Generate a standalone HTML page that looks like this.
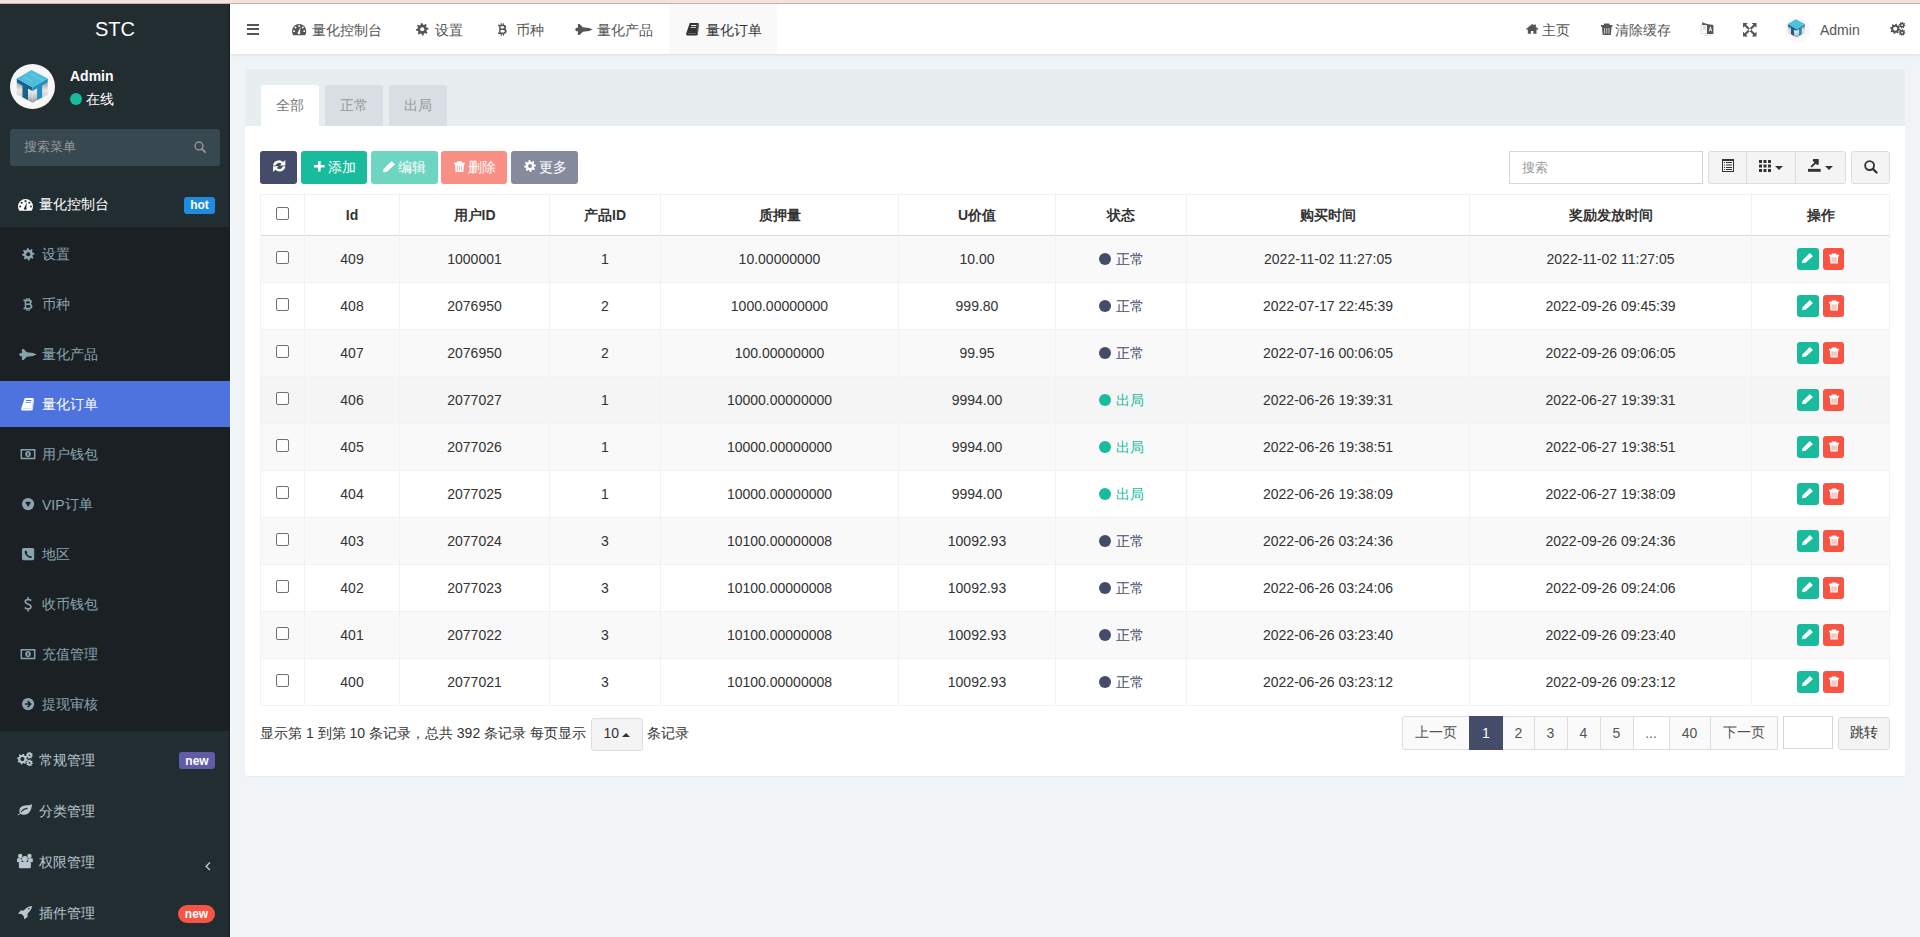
<!DOCTYPE html><html><head><meta charset="utf-8"><title>STC</title><style>
*{box-sizing:border-box;margin:0;padding:0}
html,body{width:1920px;height:937px;overflow:hidden}
body{font-family:"Liberation Sans",sans-serif;background:#f1f4f6;position:relative;color:#333;font-size:14px}
.a{position:absolute}
.t{position:absolute;white-space:nowrap;line-height:1}
svg.a{display:block;overflow:visible}
i.c{font-style:normal;display:inline-block;width:1em;text-align:center;position:relative;top:-0.5px}
</style></head><body>
<div class="a" style="left:0px;top:0px;width:1920px;height:3px;background:#f5e2db"></div>
<div class="a" style="left:0px;top:3px;width:1920px;height:1px;background:#c9b6b1"></div>
<div class="a" style="left:0px;top:4px;width:230px;height:933px;background:#222d32"></div>
<div class="t" style="left:-185px;width:600px;text-align:center;top:19.07px;font-size:20px;color:#fff;font-weight:normal;">STC</div>
<div class="a" style="left:10px;top:64px;width:45px;height:45px;border-radius:50%;background:#f6f6f6"></div>
<svg class="a" style="left:8px;top:62px" width="50" height="50" viewBox="0 0 937 937"><defs><linearGradient id="gL" x1="0" y1="0" x2="0" y2="1"><stop offset="0" stop-color="#9a9a9a"/><stop offset=".5" stop-color="#e8e8e8"/><stop offset="1" stop-color="#cfcfcf"/></linearGradient><linearGradient id="gR" x1="0" y1="0" x2="0" y2="1"><stop offset="0" stop-color="#f4f4f4"/><stop offset=".6" stop-color="#c8c8c8"/><stop offset="1" stop-color="#8a8a8a"/></linearGradient></defs><path d="M165 385L270 445V660L165 605Z" fill="url(#gL)"/><path d="M375 505L460 545V765L375 715Z" fill="url(#gR)"/><path d="M460 545L545 495V715L460 765Z" fill="url(#gR)"/><path d="M640 440L745 385V610L640 665Z" fill="url(#gL)"/><path d="M165 310L460 475V545L375 500V715L270 660V445L165 385Z" fill="#17648a"/><path d="M460 475L745 310V385L640 440V665L545 715V495L460 545Z" fill="#238ec0"/><path d="M165 310L440 148L745 310L460 475Z" fill="#4dbfdc"/><path d="M300 280L455 365M440 235L650 345" stroke="#b9e6c8" stroke-width="10" opacity=".7"/></svg>
<div class="t" style="left:70px;top:69.15px;font-size:14px;color:#fff;font-weight:bold;">Admin</div>
<div class="a" style="left:70px;top:93px;width:12px;height:12px;border-radius:50%;background:#18bc9c"></div>
<div class="t" style="left:86px;top:92.15px;font-size:14px;color:#fff;font-weight:normal;"><i class="c">在</i><i class="c">线</i></div>
<div class="a" style="left:10px;top:129px;width:210px;height:37px;background:#374850;border-radius:3px"></div>
<div class="t" style="left:24px;top:140.50px;font-size:13px;color:#999;font-weight:normal;"><i class="c">搜</i><i class="c">索</i><i class="c">菜</i><i class="c">单</i></div>
<svg class="a" style="left:194px;top:141px" width="12" height="12" viewBox="0 0 14 14"><circle cx="5.8" cy="5.8" r="4.6" fill="none" stroke="#999" stroke-width="1.6"/><path d="M9.2 9.2L13 13" stroke="#999" stroke-width="2.1" stroke-linecap="round"/></svg>
<svg class="a" style="left:17.5px;top:199px" width="15" height="11.700000000000001" viewBox="0 0 16 12.5"><path d="M8 0A8 8 0 0 0 0 8c0 1.7.5 3.2 1.4 4.5h13.2C15.5 11.2 16 9.7 16 8A8 8 0 0 0 8 0z" fill="#fff"/><circle cx="8" cy="2.3" r="1.1" fill="#222d32"/><circle cx="3.9" cy="4" r="1.1" fill="#222d32"/><circle cx="12.1" cy="4" r="1.1" fill="#222d32"/><circle cx="2.3" cy="8" r="1.1" fill="#222d32"/><circle cx="13.7" cy="8" r="1.1" fill="#222d32"/><path d="M9.6 3.2L8.9 9a1.5 1.5 0 1 1-1.9-.3z" fill="#222d32"/></svg>
<div class="t" style="left:39px;top:197.15px;font-size:14px;color:#fff;font-weight:normal;"><i class="c">量</i><i class="c">化</i><i class="c">控</i><i class="c">制</i><i class="c">台</i></div>
<div class="a" style="left:184px;top:197px;width:31px;height:17px;background:#1d8ce0;border-radius:3px"></div>
<div class="t" style="left:-100.5px;width:600px;text-align:center;top:198.84px;font-size:12px;color:#fff;font-weight:bold;">hot</div>
<div class="a" style="left:0px;top:227px;width:230px;height:504px;background:#1a2023"></div>
<div class="a" style="left:229px;top:4px;width:1px;height:933px;background:#161c1f"></div>
<div class="a" style="left:230px;top:54px;width:1px;height:883px;background:#fafbfc"></div>
<div class="t" style="left:42px;top:247.65px;font-size:14px;color:#8aa4af;font-weight:normal;"><i class="c">设</i><i class="c">置</i></div>
<svg class="a" style="left:21.7px;top:247.8px" width="12.5" height="12.5" viewBox="0 0 16 16"><polygon points="15.84,6.41 16.00,7.97 13.69,9.11 13.37,10.20 14.67,12.42 13.68,13.64 11.24,12.81 10.24,13.35 9.59,15.84 8.03,16.00 6.89,13.69 5.80,13.37 3.58,14.67 2.36,13.68 3.19,11.24 2.65,10.24 0.16,9.59 0.00,8.03 2.31,6.89 2.63,5.80 1.33,3.58 2.32,2.36 4.76,3.19 5.76,2.65 6.41,0.16 7.97,0.00 9.11,2.31 10.20,2.63 12.42,1.33 13.64,2.32 12.81,4.76 13.35,5.76" fill="#8aa4af"/><circle cx="8" cy="8" r="2.6" fill="#1a2023"/></svg>
<div class="t" style="left:42px;top:297.65px;font-size:14px;color:#8aa4af;font-weight:normal;"><i class="c">币</i><i class="c">种</i></div>
<svg class="a" style="left:22.9px;top:298px" width="10.3" height="13.1" viewBox="0 0 10 14"><path d="M3 0h1.3v1.6h1V0h1.3v1.7C8.3 2 9 3 9 4.1c0 1-.5 1.8-1.4 2.2C8.9 6.7 9.6 7.6 9.6 8.9c0 1.8-1.3 2.9-3 3.1V14H5.3v-1.9h-1V14H3v-1.9H0v-1.7h1.3V3.5H0V1.7h3zm-.1 3.4v2.4h2.6c.8 0 1.4-.5 1.4-1.2s-.6-1.2-1.4-1.2zm0 4.2v2.8h3c.9 0 1.6-.6 1.6-1.4s-.7-1.4-1.6-1.4z" fill="#8aa4af"/></svg>
<div class="t" style="left:42px;top:347.65px;font-size:14px;color:#8aa4af;font-weight:normal;"><i class="c">量</i><i class="c">化</i><i class="c">产</i><i class="c">品</i></div>
<svg class="a" style="left:19.3px;top:349px" width="17.7" height="11" viewBox="0 0 750 465"><path d="M0 235L55 165H125V0H195L335 135L600 170L750 235L600 300L335 330L195 465H125V305H55Z" fill="#8aa4af"/></svg>
<div class="a" style="left:0px;top:381px;width:230px;height:46px;background:#4e73df"></div>
<div class="t" style="left:42px;top:397.65px;font-size:14px;color:#fff;font-weight:normal;"><i class="c">量</i><i class="c">化</i><i class="c">订</i><i class="c">单</i></div>
<svg class="a" style="left:21.1px;top:397.8px" width="13.7" height="12.4" viewBox="0 0 13.7 12.4"><path d="M3.8 0H12.4L13.1 2L11.8 11.8L10.6 12.4H.9L0 11.2L.2 10.4ZM5.1 2H10.5L10.3 2.9H4.9ZM4.7 3.9H10.1L9.9 4.8H4.5ZM1.8 10.4L1.6 10.8H9.9L10.1 10.4Z" fill="#fff" fill-rule="evenodd"/><path d="M12.4 .8L11.3 11.2" stroke="#4e73df" stroke-width=".5" opacity=".6"/></svg>
<div class="t" style="left:42px;top:447.65px;font-size:14px;color:#8aa4af;font-weight:normal;"><i class="c">用</i><i class="c">户</i><i class="c">钱</i><i class="c">包</i></div>
<svg class="a" style="left:20px;top:448.8px" width="16" height="10.2" viewBox="0 0 16 11"><rect x="0" y="0" width="16" height="11" rx=".5" fill="#8aa4af"/><rect x="1.6" y="1.6" width="12.8" height="7.8" fill="#1a2023"/><ellipse cx="8" cy="5.5" rx="3" ry="3.3" fill="#8aa4af"/><rect x="7.4" y="3.6" width="1.2" height="3.8" fill="#1a2023"/></svg>
<div class="t" style="left:42px;top:497.65px;font-size:14px;color:#8aa4af;font-weight:normal;">VIP<i class="c">订</i><i class="c">单</i></div>
<svg class="a" style="left:21.8px;top:497.8px" width="12.2" height="12.2" viewBox="0 0 12.2 12.2"><circle cx="6.1" cy="6.1" r="6.1" fill="#8aa4af"/><path d="M3.2 4.1Q6.1 3.2 9 4.1L6.1 9Z" fill="#1a2023"/></svg>
<div class="t" style="left:42px;top:547.65px;font-size:14px;color:#8aa4af;font-weight:normal;"><i class="c">地</i><i class="c">区</i></div>
<svg class="a" style="left:21.8px;top:547.8px" width="12.2" height="12.2" viewBox="0 0 12.2 12.2"><rect width="12.2" height="12.2" rx="1.6" fill="#8aa4af"/><path d="M3.2 2.6C2.4 3.2 2.5 4.8 3.6 6.6S6.6 9.7 8.2 10C9 10.1 9.7 9.6 10.1 9.1L8.6 7.8L7.6 8.3C6.6 7.8 5.3 6.5 4.8 5.5L5.4 4.5L4.2 2.8Z" fill="#1a2023"/></svg>
<div class="t" style="left:42px;top:597.65px;font-size:14px;color:#8aa4af;font-weight:normal;"><i class="c">收</i><i class="c">币</i><i class="c">钱</i><i class="c">包</i></div>
<svg class="a" style="left:23.9px;top:596.7px" width="8.1" height="14.4" viewBox="0 0 8.1 14.4"><path d="M7.2 3.6Q6.2 2.5 4.2 2.5Q1.2 2.6 1.2 4.7C1.2 7.4 7 6.4 7 9.8Q7 12 4 12Q1.8 12 .7 10.6M4.1 0V2.5M4.1 12V14.4" fill="none" stroke="#8aa4af" stroke-width="1.6"/></svg>
<div class="t" style="left:42px;top:647.65px;font-size:14px;color:#8aa4af;font-weight:normal;"><i class="c">充</i><i class="c">值</i><i class="c">管</i><i class="c">理</i></div>
<svg class="a" style="left:20px;top:648.8px" width="16" height="10.2" viewBox="0 0 16 11"><rect x="0" y="0" width="16" height="11" rx=".5" fill="#8aa4af"/><rect x="1.6" y="1.6" width="12.8" height="7.8" fill="#1a2023"/><ellipse cx="8" cy="5.5" rx="3" ry="3.3" fill="#8aa4af"/><rect x="7.4" y="3.6" width="1.2" height="3.8" fill="#1a2023"/></svg>
<div class="t" style="left:42px;top:697.65px;font-size:14px;color:#8aa4af;font-weight:normal;"><i class="c">提</i><i class="c">现</i><i class="c">审</i><i class="c">核</i></div>
<svg class="a" style="left:21.8px;top:697.8px" width="12.2" height="12.2" viewBox="0 0 12.2 12.2"><circle cx="6.1" cy="6.1" r="6.1" fill="#8aa4af"/><path d="M2.9 6.1H8.9M5.6 3.1L8.7 6.1L5.6 9.1" fill="none" stroke="#1a2023" stroke-width="1.5"/></svg>
<div class="t" style="left:39px;top:753.15px;font-size:14px;color:#b8c7ce;font-weight:normal;"><i class="c">常</i><i class="c">规</i><i class="c">管</i><i class="c">理</i></div>
<div class="t" style="left:39px;top:804.15px;font-size:14px;color:#b8c7ce;font-weight:normal;"><i class="c">分</i><i class="c">类</i><i class="c">管</i><i class="c">理</i></div>
<div class="t" style="left:39px;top:855.15px;font-size:14px;color:#b8c7ce;font-weight:normal;"><i class="c">权</i><i class="c">限</i><i class="c">管</i><i class="c">理</i></div>
<div class="t" style="left:39px;top:906.15px;font-size:14px;color:#b8c7ce;font-weight:normal;"><i class="c">插</i><i class="c">件</i><i class="c">管</i><i class="c">理</i></div>
<svg class="a" style="left:17px;top:751.8px" width="16.1" height="14.2" viewBox="0 0 16.1 14.2"><polygon points="10.77,7.63 10.57,8.67 9.02,9.03 8.57,9.70 8.83,11.27 7.95,11.86 6.59,11.02 5.80,11.18 4.87,12.47 3.83,12.27 3.47,10.72 2.80,10.27 1.23,10.53 0.64,9.65 1.48,8.29 1.32,7.50 0.03,6.57 0.23,5.53 1.78,5.17 2.23,4.50 1.97,2.93 2.85,2.34 4.21,3.18 5.00,3.02 5.93,1.73 6.97,1.93 7.33,3.48 8.00,3.93 9.57,3.67 10.16,4.55 9.32,5.91 9.48,6.70" fill="#b8c7ce"/><circle cx="5.4" cy="7.1" r="2.1" fill="#222d32"/><polygon points="15.98,3.64 15.85,4.32 14.79,4.53 14.51,4.95 14.72,6.01 14.15,6.39 13.25,5.79 12.75,5.89 12.16,6.78 11.48,6.65 11.27,5.59 10.85,5.31 9.79,5.52 9.41,4.95 10.01,4.05 9.91,3.55 9.02,2.96 9.15,2.28 10.21,2.07 10.49,1.65 10.28,0.59 10.85,0.21 11.75,0.81 12.25,0.71 12.84,-0.18 13.52,-0.05 13.73,1.01 14.15,1.29 15.21,1.08 15.59,1.65 14.99,2.55 15.09,3.05" fill="#b8c7ce"/><circle cx="12.5" cy="3.3" r="0.9" fill="#222d32"/><polygon points="15.98,11.24 15.85,11.92 14.79,12.13 14.51,12.55 14.72,13.61 14.15,13.99 13.25,13.39 12.75,13.49 12.16,14.38 11.48,14.25 11.27,13.19 10.85,12.91 9.79,13.12 9.41,12.55 10.01,11.65 9.91,11.15 9.02,10.56 9.15,9.88 10.21,9.67 10.49,9.25 10.28,8.19 10.85,7.81 11.75,8.41 12.25,8.31 12.84,7.42 13.52,7.55 13.73,8.61 14.15,8.89 15.21,8.68 15.59,9.25 14.99,10.15 15.09,10.65" fill="#b8c7ce"/><circle cx="12.5" cy="10.9" r="0.9" fill="#222d32"/></svg>
<svg class="a" style="left:17.3px;top:803.7px" width="15.1" height="11.3" viewBox="0 0 15.1 11.3"><path d="M15 0C13.5 1.3 11 1.3 8 1.5C4.5 1.8 2.6 3.6 2.4 6.5C2.3 7.8 2.6 8.7 3 9.2L0.3 11L1.2 11.3L3.6 9.8C4.5 10.6 6 11 7.6 10.8C11.5 10.4 13.5 7.5 14.4 4C14.7 2.5 14.9 1.2 15 0Z" fill="#b8c7ce"/><path d="M4.2 7.8Q6.4 4.8 10.2 4.4" fill="none" stroke="#222d32" stroke-width="1.1" stroke-linecap="round"/></svg>
<svg class="a" style="left:17px;top:853.8px" width="15.8" height="14.2" viewBox="0 0 15.8 14.2"><circle cx="3.2" cy="2" r="2.2" fill="#b8c7ce"/><circle cx="12.5" cy="2" r="2.2" fill="#b8c7ce"/><rect x="0" y="4.3" width="4.7" height="3.9" rx=".8" fill="#b8c7ce"/><rect x="11.1" y="4.3" width="4.7" height="3.9" rx=".8" fill="#b8c7ce"/><circle cx="7.9" cy="5" r="2.9" fill="#b8c7ce"/><rect x="1.9" y="8.1" width="12" height="6.1" rx="1.2" fill="#b8c7ce"/></svg>
<svg class="a" style="left:18px;top:905.7px" width="14" height="13.3" viewBox="0 0 14 13.3"><path d="M14 0C10.5 .2 8 1.8 5.8 4.4L2.6 4.4L0 7.8L3.4 8.1L5.8 10.3L6.2 13.3L9.6 10.9L9.6 7.5C12.2 5.3 13.8 3 14 0Z" fill="#b8c7ce"/><circle cx="10.9" cy="2.8" r=".8" fill="#222d32"/></svg>
<div class="a" style="left:179px;top:752px;width:36px;height:17px;background:#605ca8;border-radius:3px"></div>
<div class="t" style="left:-103px;width:600px;text-align:center;top:754.84px;font-size:12px;color:#fff;font-weight:bold;">new</div>
<div class="a" style="left:178px;top:905px;width:37px;height:18px;background:#f75444;border-radius:9px"></div>
<div class="t" style="left:-103.5px;width:600px;text-align:center;top:907.84px;font-size:12px;color:#fff;font-weight:bold;">new</div>
<svg class="a" style="left:204.5px;top:862px" width="6" height="8.5" viewBox="0 0 6 9"><path d="M5 .5L1 4.5 5 8.5" fill="none" stroke="#b8c7ce" stroke-width="1.5"/></svg>
<div class="a" style="left:230px;top:4px;width:1690px;height:50px;background:#fff;box-shadow:0 1px 3px rgba(0,0,0,.09)"></div>
<div class="a" style="left:246.5px;top:23.5px;width:12.5px;height:2px;background:#555"></div>
<div class="a" style="left:246.5px;top:28px;width:12.5px;height:2px;background:#555"></div>
<div class="a" style="left:246.5px;top:32.5px;width:12.5px;height:2px;background:#555"></div>
<div class="a" style="left:669px;top:4px;width:108px;height:50px;background:#f9f9f9"></div>
<div class="t" style="left:312px;top:23.15px;font-size:14px;color:#555;font-weight:normal;"><i class="c">量</i><i class="c">化</i><i class="c">控</i><i class="c">制</i><i class="c">台</i></div>
<div class="t" style="left:435px;top:23.15px;font-size:14px;color:#555;font-weight:normal;"><i class="c">设</i><i class="c">置</i></div>
<div class="t" style="left:515.8px;top:23.15px;font-size:14px;color:#555;font-weight:normal;"><i class="c">币</i><i class="c">种</i></div>
<div class="t" style="left:597px;top:23.15px;font-size:14px;color:#555;font-weight:normal;"><i class="c">量</i><i class="c">化</i><i class="c">产</i><i class="c">品</i></div>
<div class="t" style="left:706px;top:23.15px;font-size:14px;color:#333;font-weight:normal;"><i class="c">量</i><i class="c">化</i><i class="c">订</i><i class="c">单</i></div>
<svg class="a" style="left:291.8px;top:24px" width="14.3" height="11.154000000000002" viewBox="0 0 16 12.5"><path d="M8 0A8 8 0 0 0 0 8c0 1.7.5 3.2 1.4 4.5h13.2C15.5 11.2 16 9.7 16 8A8 8 0 0 0 8 0z" fill="#555"/><circle cx="8" cy="2.3" r="1.1" fill="#fff"/><circle cx="3.9" cy="4" r="1.1" fill="#fff"/><circle cx="12.1" cy="4" r="1.1" fill="#fff"/><circle cx="2.3" cy="8" r="1.1" fill="#fff"/><circle cx="13.7" cy="8" r="1.1" fill="#fff"/><path d="M9.6 3.2L8.9 9a1.5 1.5 0 1 1-1.9-.3z" fill="#fff"/></svg>
<svg class="a" style="left:415.8px;top:23px" width="12.5" height="12.5" viewBox="0 0 16 16"><polygon points="15.84,6.41 16.00,7.97 13.69,9.11 13.37,10.20 14.67,12.42 13.68,13.64 11.24,12.81 10.24,13.35 9.59,15.84 8.03,16.00 6.89,13.69 5.80,13.37 3.58,14.67 2.36,13.68 3.19,11.24 2.65,10.24 0.16,9.59 0.00,8.03 2.31,6.89 2.63,5.80 1.33,3.58 2.32,2.36 4.76,3.19 5.76,2.65 6.41,0.16 7.97,0.00 9.11,2.31 10.20,2.63 12.42,1.33 13.64,2.32 12.81,4.76 13.35,5.76" fill="#555"/><circle cx="8" cy="8" r="2.6" fill="#fff"/></svg>
<svg class="a" style="left:498px;top:22.5px" width="9" height="13" viewBox="0 0 10 14"><path d="M3 0h1.3v1.6h1V0h1.3v1.7C8.3 2 9 3 9 4.1c0 1-.5 1.8-1.4 2.2C8.9 6.7 9.6 7.6 9.6 8.9c0 1.8-1.3 2.9-3 3.1V14H5.3v-1.9h-1V14H3v-1.9H0v-1.7h1.3V3.5H0V1.7h3zm-.1 3.4v2.4h2.6c.8 0 1.4-.5 1.4-1.2s-.6-1.2-1.4-1.2zm0 4.2v2.8h3c.9 0 1.6-.6 1.6-1.4s-.7-1.4-1.6-1.4z" fill="#555"/></svg>
<svg class="a" style="left:575.3px;top:24px" width="17.6" height="10.9" viewBox="0 0 750 465"><path d="M0 235L55 165H125V0H195L335 135L600 170L750 235L600 300L335 330L195 465H125V305H55Z" fill="#555"/></svg>
<svg class="a" style="left:685.6px;top:23px" width="13.7" height="12.4" viewBox="0 0 13.7 12.4"><path d="M3.8 0H12.4L13.1 2L11.8 11.8L10.6 12.4H.9L0 11.2L.2 10.4ZM5.1 2H10.5L10.3 2.9H4.9ZM4.7 3.9H10.1L9.9 4.8H4.5ZM1.8 10.4L1.6 10.8H9.9L10.1 10.4Z" fill="#333" fill-rule="evenodd"/><path d="M12.4 .8L11.3 11.2" stroke="#f9f9f9" stroke-width=".5" opacity=".6"/></svg>
<div class="t" style="left:1542px;top:23.15px;font-size:14px;color:#555;font-weight:normal;"><i class="c">主</i><i class="c">页</i></div>
<svg class="a" style="left:1525.7px;top:23.9px" width="12.3" height="9.9" viewBox="0 0 15 12"><path d="M7.5 0L0 6.2l1 1 1.2-1V12h3.8V8.5h3V12h3.8V6.2l1.2 1 1-1L12 3.3V.6h-2v1L7.5 0z" fill="#555"/></svg>
<div class="t" style="left:1615px;top:23.15px;font-size:14px;color:#555;font-weight:normal;"><i class="c">清</i><i class="c">除</i><i class="c">缓</i><i class="c">存</i></div>
<svg class="a" style="left:1600.5px;top:22.5px" width="11.5" height="12.5" viewBox="0 0 11 11"><path d="M3.2 0h4.6l.7 1.5H11v1.6H0V1.5h2.5zM.9 3.1h9.2l-.7 7.9H1.6z" fill="#555"/><path d="M3.4 4.4v5.4M5.5 4.4v5.4M7.6 4.4v5.4" stroke="#fff" stroke-width=".8" opacity=".85"/></svg>
<svg class="a" style="left:1701px;top:21.9px" width="12.7" height="13.8" viewBox="225 185 475 515"><path d="M235 300H450V615H235Z" fill="#fff" stroke="#c8c8c8" stroke-width="22"/><path d="M450 255L690 300V630H450Z" fill="#555"/><path d="M270 190L450 255V300H270Z" fill="#555"/><path d="M520 530L565 360H595L640 530H610L600 490H560L550 530ZM567 460H593L580 405Z" fill="#fff"/><path d="M300 370L400 370M350 340V380M310 470L390 410M320 410L400 480" stroke="#999" stroke-width="18"/><path d="M340 680H570L590 650" fill="none" stroke="#bbb" stroke-width="18"/></svg>
<svg class="a" style="left:1742.5px;top:22.5px" width="13.5" height="13.5" viewBox="0 0 14 14"><path d="M0 0h5L3.3 1.7 7 5.4 5.4 7 1.7 3.3 0 5zM14 0v5l-1.7-1.7L8.6 7 7 5.4l3.7-3.7L9 0zM14 14H9l1.7-1.7L7 8.6 8.6 7l3.7 3.7L14 9zM0 14V9l1.7 1.7L5.4 7 7 8.6l-3.7 3.7L5 14z" fill="#555"/></svg>
<div class="a" style="left:1785px;top:17.5px;width:25px;height:25px;border-radius:50%;background:#f8f8f8"></div>
<svg class="a" style="left:1782.5px;top:15.2px" width="27.5" height="27.5" viewBox="0 0 937 937"><defs><linearGradient id="gL" x1="0" y1="0" x2="0" y2="1"><stop offset="0" stop-color="#9a9a9a"/><stop offset=".5" stop-color="#e8e8e8"/><stop offset="1" stop-color="#cfcfcf"/></linearGradient><linearGradient id="gR" x1="0" y1="0" x2="0" y2="1"><stop offset="0" stop-color="#f4f4f4"/><stop offset=".6" stop-color="#c8c8c8"/><stop offset="1" stop-color="#8a8a8a"/></linearGradient></defs><path d="M165 385L270 445V660L165 605Z" fill="url(#gL)"/><path d="M375 505L460 545V765L375 715Z" fill="url(#gR)"/><path d="M460 545L545 495V715L460 765Z" fill="url(#gR)"/><path d="M640 440L745 385V610L640 665Z" fill="url(#gL)"/><path d="M165 310L460 475V545L375 500V715L270 660V445L165 385Z" fill="#17648a"/><path d="M460 475L745 310V385L640 440V665L545 715V495L460 545Z" fill="#238ec0"/><path d="M165 310L440 148L745 310L460 475Z" fill="#4dbfdc"/><path d="M300 280L455 365M440 235L650 345" stroke="#b9e6c8" stroke-width="10" opacity=".7"/></svg>
<div class="t" style="left:1820px;top:22.65px;font-size:14px;color:#555;font-weight:normal;">Admin</div>
<svg class="a" style="left:1890px;top:22px" width="15.5" height="13.7" viewBox="0 0 16.1 14.2"><polygon points="10.77,7.63 10.57,8.67 9.02,9.03 8.57,9.70 8.83,11.27 7.95,11.86 6.59,11.02 5.80,11.18 4.87,12.47 3.83,12.27 3.47,10.72 2.80,10.27 1.23,10.53 0.64,9.65 1.48,8.29 1.32,7.50 0.03,6.57 0.23,5.53 1.78,5.17 2.23,4.50 1.97,2.93 2.85,2.34 4.21,3.18 5.00,3.02 5.93,1.73 6.97,1.93 7.33,3.48 8.00,3.93 9.57,3.67 10.16,4.55 9.32,5.91 9.48,6.70" fill="#555"/><circle cx="5.4" cy="7.1" r="2.1" fill="#fff"/><polygon points="15.98,3.64 15.85,4.32 14.79,4.53 14.51,4.95 14.72,6.01 14.15,6.39 13.25,5.79 12.75,5.89 12.16,6.78 11.48,6.65 11.27,5.59 10.85,5.31 9.79,5.52 9.41,4.95 10.01,4.05 9.91,3.55 9.02,2.96 9.15,2.28 10.21,2.07 10.49,1.65 10.28,0.59 10.85,0.21 11.75,0.81 12.25,0.71 12.84,-0.18 13.52,-0.05 13.73,1.01 14.15,1.29 15.21,1.08 15.59,1.65 14.99,2.55 15.09,3.05" fill="#555"/><circle cx="12.5" cy="3.3" r="0.9" fill="#fff"/><polygon points="15.98,11.24 15.85,11.92 14.79,12.13 14.51,12.55 14.72,13.61 14.15,13.99 13.25,13.39 12.75,13.49 12.16,14.38 11.48,14.25 11.27,13.19 10.85,12.91 9.79,13.12 9.41,12.55 10.01,11.65 9.91,11.15 9.02,10.56 9.15,9.88 10.21,9.67 10.49,9.25 10.28,8.19 10.85,7.81 11.75,8.41 12.25,8.31 12.84,7.42 13.52,7.55 13.73,8.61 14.15,8.89 15.21,8.68 15.59,9.25 14.99,10.15 15.09,10.65" fill="#555"/><circle cx="12.5" cy="10.9" r="0.9" fill="#fff"/></svg>
<div class="a" style="left:245px;top:69px;width:1660px;height:707px;background:#fff;border-radius:3px;box-shadow:0 1px 1px rgba(0,0,0,.03)"></div>
<div class="a" style="left:245px;top:69px;width:1660px;height:57px;background:#e8edf0;border-radius:3px 3px 0 0"></div>
<div class="a" style="left:261px;top:85px;width:58px;height:41px;background:#fff;border-radius:3px 3px 0 0"></div>
<div class="a" style="left:325px;top:85px;width:58px;height:41px;background:#d8dee3;border-radius:3px 3px 0 0"></div>
<div class="a" style="left:389px;top:85px;width:58px;height:41px;background:#d8dee3;border-radius:3px 3px 0 0"></div>
<div class="t" style="left:276px;top:98.65px;font-size:14px;color:#777;font-weight:normal;"><i class="c">全</i><i class="c">部</i></div>
<div class="t" style="left:340px;top:98.65px;font-size:14px;color:#999;font-weight:normal;"><i class="c">正</i><i class="c">常</i></div>
<div class="t" style="left:404px;top:98.65px;font-size:14px;color:#999;font-weight:normal;"><i class="c">出</i><i class="c">局</i></div>
<div class="a" style="left:260px;top:151px;width:37px;height:33px;background:#444c69;border-radius:3px"></div>
<svg class="a" style="left:272.8px;top:160px" width="12.4" height="11.904000000000002" viewBox="0 0 12.5 12"><path d="M0 5.6A6 6 0 0 1 10.2 2.1L12.4 0V5.6H6.9L8.6 3.9A3.6 3.6 0 0 0 2.6 5.6Z" fill="#fff"/><path d="M12.5 6.4A6 6 0 0 1 2.3 9.9L0.1 12V6.4H5.6L3.9 8.1A3.6 3.6 0 0 0 9.9 6.4Z" fill="#fff"/></svg>
<div class="a" style="left:301px;top:151px;width:66px;height:33px;background:#18bc9c;border-radius:3px"></div>
<svg class="a" style="left:313.8px;top:160.6px" width="10.6" height="10.6" viewBox="0 0 12 12"><path d="M4.5 0h3v4.5H12v3H7.5V12h-3V7.5H0v-3h4.5z" fill="#fff"/></svg>
<div class="t" style="left:328px;top:160.15px;font-size:14px;color:#fff;font-weight:normal;"><i class="c">添</i><i class="c">加</i></div>
<div class="a" style="left:371px;top:151px;width:67px;height:33px;background:#6dd5c0;border-radius:3px"></div>
<svg class="a" style="left:383px;top:161px" width="12.2" height="11.183333333333332" viewBox="0 0 12 11"><path d="M0 11L.6 7.8L7.9 .5Q8.4 .1 8.9 .5L11.4 2.9Q11.8 3.4 11.4 3.8L3.8 10.5Z" fill="#fff"/><path d="M6.9 1.6L10.3 4.8" stroke="#000" stroke-opacity=".12" stroke-width=".6"/></svg>
<div class="t" style="left:398.4px;top:160.15px;font-size:14px;color:#fff;font-weight:normal;"><i class="c">编</i><i class="c">辑</i></div>
<div class="a" style="left:441px;top:151px;width:66px;height:33px;background:#fa9085;border-radius:3px"></div>
<svg class="a" style="left:454px;top:160.7px" width="10.9" height="11.2" viewBox="0 0 11 11"><path d="M3.2 0h4.6l.7 1.5H11v1.6H0V1.5h2.5zM.9 3.1h9.2l-.7 7.9H1.6z" fill="#fff"/><path d="M3.4 4.4v5.4M5.5 4.4v5.4M7.6 4.4v5.4" stroke="#fa9085" stroke-width=".8" opacity=".85"/></svg>
<div class="t" style="left:468px;top:160.15px;font-size:14px;color:#fff;font-weight:normal;"><i class="c">删</i><i class="c">除</i></div>
<div class="a" style="left:511px;top:151px;width:67px;height:33px;background:#858a9d;border-radius:3px"></div>
<svg class="a" style="left:523.9px;top:160.3px" width="12" height="12" viewBox="0 0 16 16"><polygon points="15.84,6.41 16.00,7.97 13.69,9.11 13.37,10.20 14.67,12.42 13.68,13.64 11.24,12.81 10.24,13.35 9.59,15.84 8.03,16.00 6.89,13.69 5.80,13.37 3.58,14.67 2.36,13.68 3.19,11.24 2.65,10.24 0.16,9.59 0.00,8.03 2.31,6.89 2.63,5.80 1.33,3.58 2.32,2.36 4.76,3.19 5.76,2.65 6.41,0.16 7.97,0.00 9.11,2.31 10.20,2.63 12.42,1.33 13.64,2.32 12.81,4.76 13.35,5.76" fill="#fff"/><circle cx="8" cy="8" r="2.6" fill="#858a9d"/></svg>
<div class="t" style="left:539px;top:160.15px;font-size:14px;color:#fff;font-weight:normal;"><i class="c">更</i><i class="c">多</i></div>
<div class="a" style="left:1509px;top:151px;width:194px;height:33px;border:1px solid #d2d6de;background:#fff"></div>
<div class="t" style="left:1521.5px;top:161.50px;font-size:13px;color:#999;font-weight:normal;"><i class="c">搜</i><i class="c">索</i></div>
<div class="a" style="left:1708px;top:151px;width:138px;height:33px;border:1px solid #ddd;background:#f4f4f4;border-radius:3px"></div>
<div class="a" style="left:1746px;top:152px;width:1px;height:31px;background:#ddd"></div>
<div class="a" style="left:1795px;top:152px;width:1px;height:31px;background:#ddd"></div>
<svg class="a" style="left:1722px;top:159px" width="12" height="13" viewBox="0 0 12 13"><path d="M0 0H12V13H0ZM1 2V12H11V2Z" fill="#333"/><path d="M2 3.5h1M4 3.5h6M2 6h1M4 6h6M2 8.5h1M4 8.5h6M2 10.5h1M4 10.5h6" stroke="#333" stroke-width="1"/></svg>
<svg class="a" style="left:1759px;top:160px" width="12" height="12" viewBox="0 0 12 12"><rect x="0" y="0" width="3" height="3" fill="#333"/><rect x="0" y="4.5" width="3" height="3" fill="#333"/><rect x="0" y="9" width="3" height="3" fill="#333"/><rect x="4.5" y="0" width="3" height="3" fill="#333"/><rect x="4.5" y="4.5" width="3" height="3" fill="#333"/><rect x="4.5" y="9" width="3" height="3" fill="#333"/><rect x="9" y="0" width="3" height="3" fill="#333"/><rect x="9" y="4.5" width="3" height="3" fill="#333"/><rect x="9" y="9" width="3" height="3" fill="#333"/></svg>
<svg class="a" style="left:1775px;top:166px" width="8" height="4" viewBox="0 0 8 4"><path d="M0 0h8L4 4z" fill="#333"/></svg>
<svg class="a" style="left:1808px;top:159px" width="12.7" height="12.9" viewBox="0 0 13 13"><path d="M0 10H13V13H0Z" fill="#333"/><path d="M2.5 7.3L6.6 3.4L4.8 1.6L5.3 0H11V5.5L9.5 6.1L8 4.7L3.9 8.6Z" fill="#333"/></svg>
<svg class="a" style="left:1825px;top:166px" width="8" height="4" viewBox="0 0 8 4"><path d="M0 0h8L4 4z" fill="#333"/></svg>
<div class="a" style="left:1851px;top:151px;width:39px;height:33px;border:1px solid #ddd;background:#f4f4f4;border-radius:3px"></div>
<svg class="a" style="left:1863.5px;top:160px" width="13.5" height="13.5" viewBox="0 0 14 14"><circle cx="5.8" cy="5.8" r="4.6" fill="none" stroke="#333" stroke-width="1.9"/><path d="M9.2 9.2L13 13" stroke="#333" stroke-width="2.4" stroke-linecap="round"/></svg>
<div class="a" style="left:260px;top:194px;width:1630px;height:512px;border:1px solid #f2f2f2;background:#fff"></div>
<div class="a" style="left:261px;top:236px;width:1628px;height:46px;background:#f9f9f9"></div>
<div class="a" style="left:261px;top:235px;width:1628px;height:1px;background:#ddd"></div>
<div class="a" style="left:261px;top:283px;width:1628px;height:46px;background:#fff"></div>
<div class="a" style="left:261px;top:282px;width:1628px;height:1px;background:#f2f2f2"></div>
<div class="a" style="left:261px;top:330px;width:1628px;height:46px;background:#f9f9f9"></div>
<div class="a" style="left:261px;top:329px;width:1628px;height:1px;background:#f2f2f2"></div>
<div class="a" style="left:261px;top:377px;width:1628px;height:46px;background:#f5f5f5"></div>
<div class="a" style="left:261px;top:376px;width:1628px;height:1px;background:#f2f2f2"></div>
<div class="a" style="left:261px;top:424px;width:1628px;height:46px;background:#f9f9f9"></div>
<div class="a" style="left:261px;top:423px;width:1628px;height:1px;background:#f2f2f2"></div>
<div class="a" style="left:261px;top:471px;width:1628px;height:46px;background:#fff"></div>
<div class="a" style="left:261px;top:470px;width:1628px;height:1px;background:#f2f2f2"></div>
<div class="a" style="left:261px;top:518px;width:1628px;height:46px;background:#f9f9f9"></div>
<div class="a" style="left:261px;top:517px;width:1628px;height:1px;background:#f2f2f2"></div>
<div class="a" style="left:261px;top:565px;width:1628px;height:46px;background:#fff"></div>
<div class="a" style="left:261px;top:564px;width:1628px;height:1px;background:#f2f2f2"></div>
<div class="a" style="left:261px;top:612px;width:1628px;height:46px;background:#f9f9f9"></div>
<div class="a" style="left:261px;top:611px;width:1628px;height:1px;background:#f2f2f2"></div>
<div class="a" style="left:261px;top:659px;width:1628px;height:46px;background:#fff"></div>
<div class="a" style="left:261px;top:658px;width:1628px;height:1px;background:#f2f2f2"></div>
<div class="a" style="left:261px;top:705px;width:1628px;height:1px;background:#f2f2f2"></div>
<div class="a" style="left:304px;top:195px;width:1px;height:510px;background:#f2f2f2"></div>
<div class="a" style="left:399px;top:195px;width:1px;height:510px;background:#f2f2f2"></div>
<div class="a" style="left:549px;top:195px;width:1px;height:510px;background:#f2f2f2"></div>
<div class="a" style="left:660px;top:195px;width:1px;height:510px;background:#f2f2f2"></div>
<div class="a" style="left:898px;top:195px;width:1px;height:510px;background:#f2f2f2"></div>
<div class="a" style="left:1055px;top:195px;width:1px;height:510px;background:#f2f2f2"></div>
<div class="a" style="left:1186px;top:195px;width:1px;height:510px;background:#f2f2f2"></div>
<div class="a" style="left:1469px;top:195px;width:1px;height:510px;background:#f2f2f2"></div>
<div class="a" style="left:1751px;top:195px;width:1px;height:510px;background:#f2f2f2"></div>
<div class="t" style="left:52.0px;width:600px;text-align:center;top:208.15px;font-size:14px;color:#333;font-weight:bold;">Id</div>
<div class="t" style="left:174.5px;width:600px;text-align:center;top:208.15px;font-size:14px;color:#333;font-weight:bold;"><i class="c">用</i><i class="c">户</i>ID</div>
<div class="t" style="left:305.0px;width:600px;text-align:center;top:208.15px;font-size:14px;color:#333;font-weight:bold;"><i class="c">产</i><i class="c">品</i>ID</div>
<div class="t" style="left:479.5px;width:600px;text-align:center;top:208.15px;font-size:14px;color:#333;font-weight:bold;"><i class="c">质</i><i class="c">押</i><i class="c">量</i></div>
<div class="t" style="left:677.0px;width:600px;text-align:center;top:208.15px;font-size:14px;color:#333;font-weight:bold;">U<i class="c">价</i><i class="c">值</i></div>
<div class="t" style="left:821.0px;width:600px;text-align:center;top:208.15px;font-size:14px;color:#333;font-weight:bold;"><i class="c">状</i><i class="c">态</i></div>
<div class="t" style="left:1028.0px;width:600px;text-align:center;top:208.15px;font-size:14px;color:#333;font-weight:bold;"><i class="c">购</i><i class="c">买</i><i class="c">时</i><i class="c">间</i></div>
<div class="t" style="left:1310.5px;width:600px;text-align:center;top:208.15px;font-size:14px;color:#333;font-weight:bold;"><i class="c">奖</i><i class="c">励</i><i class="c">发</i><i class="c">放</i><i class="c">时</i><i class="c">间</i></div>
<div class="t" style="left:1520.5px;width:600px;text-align:center;top:208.15px;font-size:14px;color:#333;font-weight:bold;"><i class="c">操</i><i class="c">作</i></div>
<div class="a" style="left:276px;top:207px;width:13px;height:13px;border:1px solid #707070;border-radius:2px;background:#fff"></div>
<div class="a" style="left:276px;top:251px;width:13px;height:13px;border:1px solid #707070;border-radius:2px;background:#fff"></div>
<div class="t" style="left:52.0px;width:600px;text-align:center;top:252.45px;font-size:14px;color:#333;font-weight:normal;">409</div>
<div class="t" style="left:174.5px;width:600px;text-align:center;top:252.45px;font-size:14px;color:#333;font-weight:normal;">1000001</div>
<div class="t" style="left:305.0px;width:600px;text-align:center;top:252.45px;font-size:14px;color:#333;font-weight:normal;">1</div>
<div class="t" style="left:479.5px;width:600px;text-align:center;top:252.45px;font-size:14px;color:#333;font-weight:normal;">10.00000000</div>
<div class="t" style="left:677.0px;width:600px;text-align:center;top:252.45px;font-size:14px;color:#333;font-weight:normal;">10.00</div>
<div class="a" style="left:1099px;top:253px;width:12px;height:12px;border-radius:50%;background:#444c69"></div>
<div class="t" style="left:1116px;top:252.45px;font-size:14px;color:#444c69;font-weight:normal;"><i class="c">正</i><i class="c">常</i></div>
<div class="t" style="left:1028.0px;width:600px;text-align:center;top:252.45px;font-size:14px;color:#333;font-weight:normal;">2022-11-02 11:27:05</div>
<div class="t" style="left:1310.5px;width:600px;text-align:center;top:252.45px;font-size:14px;color:#333;font-weight:normal;">2022-11-02 11:27:05</div>
<div class="a" style="left:1797px;top:248px;width:22px;height:22px;background:#18bc9c;border-radius:3px"></div>
<svg class="a" style="left:1802.2px;top:253.4px" width="11.1" height="10.174999999999999" viewBox="0 0 12 11"><path d="M0 11L.6 7.8L7.9 .5Q8.4 .1 8.9 .5L11.4 2.9Q11.8 3.4 11.4 3.8L3.8 10.5Z" fill="#fff"/><path d="M6.9 1.6L10.3 4.8" stroke="#000" stroke-opacity=".12" stroke-width=".6"/></svg>
<div class="a" style="left:1823px;top:248px;width:21px;height:22px;background:#f75444;border-radius:3px"></div>
<svg class="a" style="left:1828.6px;top:253px" width="10.1" height="10.9" viewBox="0 0 11 11"><path d="M3.2 0h4.6l.7 1.5H11v1.6H0V1.5h2.5zM.9 3.1h9.2l-.7 7.9H1.6z" fill="#fff"/><path d="M3.4 4.4v5.4M5.5 4.4v5.4M7.6 4.4v5.4" stroke="#f75444" stroke-width=".8" opacity=".85"/></svg>
<div class="a" style="left:276px;top:298px;width:13px;height:13px;border:1px solid #707070;border-radius:2px;background:#fff"></div>
<div class="t" style="left:52.0px;width:600px;text-align:center;top:299.45px;font-size:14px;color:#333;font-weight:normal;">408</div>
<div class="t" style="left:174.5px;width:600px;text-align:center;top:299.45px;font-size:14px;color:#333;font-weight:normal;">2076950</div>
<div class="t" style="left:305.0px;width:600px;text-align:center;top:299.45px;font-size:14px;color:#333;font-weight:normal;">2</div>
<div class="t" style="left:479.5px;width:600px;text-align:center;top:299.45px;font-size:14px;color:#333;font-weight:normal;">1000.00000000</div>
<div class="t" style="left:677.0px;width:600px;text-align:center;top:299.45px;font-size:14px;color:#333;font-weight:normal;">999.80</div>
<div class="a" style="left:1099px;top:300px;width:12px;height:12px;border-radius:50%;background:#444c69"></div>
<div class="t" style="left:1116px;top:299.45px;font-size:14px;color:#444c69;font-weight:normal;"><i class="c">正</i><i class="c">常</i></div>
<div class="t" style="left:1028.0px;width:600px;text-align:center;top:299.45px;font-size:14px;color:#333;font-weight:normal;">2022-07-17 22:45:39</div>
<div class="t" style="left:1310.5px;width:600px;text-align:center;top:299.45px;font-size:14px;color:#333;font-weight:normal;">2022-09-26 09:45:39</div>
<div class="a" style="left:1797px;top:295px;width:22px;height:22px;background:#18bc9c;border-radius:3px"></div>
<svg class="a" style="left:1802.2px;top:300.4px" width="11.1" height="10.174999999999999" viewBox="0 0 12 11"><path d="M0 11L.6 7.8L7.9 .5Q8.4 .1 8.9 .5L11.4 2.9Q11.8 3.4 11.4 3.8L3.8 10.5Z" fill="#fff"/><path d="M6.9 1.6L10.3 4.8" stroke="#000" stroke-opacity=".12" stroke-width=".6"/></svg>
<div class="a" style="left:1823px;top:295px;width:21px;height:22px;background:#f75444;border-radius:3px"></div>
<svg class="a" style="left:1828.6px;top:300px" width="10.1" height="10.9" viewBox="0 0 11 11"><path d="M3.2 0h4.6l.7 1.5H11v1.6H0V1.5h2.5zM.9 3.1h9.2l-.7 7.9H1.6z" fill="#fff"/><path d="M3.4 4.4v5.4M5.5 4.4v5.4M7.6 4.4v5.4" stroke="#f75444" stroke-width=".8" opacity=".85"/></svg>
<div class="a" style="left:276px;top:345px;width:13px;height:13px;border:1px solid #707070;border-radius:2px;background:#fff"></div>
<div class="t" style="left:52.0px;width:600px;text-align:center;top:346.45px;font-size:14px;color:#333;font-weight:normal;">407</div>
<div class="t" style="left:174.5px;width:600px;text-align:center;top:346.45px;font-size:14px;color:#333;font-weight:normal;">2076950</div>
<div class="t" style="left:305.0px;width:600px;text-align:center;top:346.45px;font-size:14px;color:#333;font-weight:normal;">2</div>
<div class="t" style="left:479.5px;width:600px;text-align:center;top:346.45px;font-size:14px;color:#333;font-weight:normal;">100.00000000</div>
<div class="t" style="left:677.0px;width:600px;text-align:center;top:346.45px;font-size:14px;color:#333;font-weight:normal;">99.95</div>
<div class="a" style="left:1099px;top:347px;width:12px;height:12px;border-radius:50%;background:#444c69"></div>
<div class="t" style="left:1116px;top:346.45px;font-size:14px;color:#444c69;font-weight:normal;"><i class="c">正</i><i class="c">常</i></div>
<div class="t" style="left:1028.0px;width:600px;text-align:center;top:346.45px;font-size:14px;color:#333;font-weight:normal;">2022-07-16 00:06:05</div>
<div class="t" style="left:1310.5px;width:600px;text-align:center;top:346.45px;font-size:14px;color:#333;font-weight:normal;">2022-09-26 09:06:05</div>
<div class="a" style="left:1797px;top:342px;width:22px;height:22px;background:#18bc9c;border-radius:3px"></div>
<svg class="a" style="left:1802.2px;top:347.4px" width="11.1" height="10.174999999999999" viewBox="0 0 12 11"><path d="M0 11L.6 7.8L7.9 .5Q8.4 .1 8.9 .5L11.4 2.9Q11.8 3.4 11.4 3.8L3.8 10.5Z" fill="#fff"/><path d="M6.9 1.6L10.3 4.8" stroke="#000" stroke-opacity=".12" stroke-width=".6"/></svg>
<div class="a" style="left:1823px;top:342px;width:21px;height:22px;background:#f75444;border-radius:3px"></div>
<svg class="a" style="left:1828.6px;top:347px" width="10.1" height="10.9" viewBox="0 0 11 11"><path d="M3.2 0h4.6l.7 1.5H11v1.6H0V1.5h2.5zM.9 3.1h9.2l-.7 7.9H1.6z" fill="#fff"/><path d="M3.4 4.4v5.4M5.5 4.4v5.4M7.6 4.4v5.4" stroke="#f75444" stroke-width=".8" opacity=".85"/></svg>
<div class="a" style="left:276px;top:392px;width:13px;height:13px;border:1px solid #707070;border-radius:2px;background:#fff"></div>
<div class="t" style="left:52.0px;width:600px;text-align:center;top:393.45px;font-size:14px;color:#333;font-weight:normal;">406</div>
<div class="t" style="left:174.5px;width:600px;text-align:center;top:393.45px;font-size:14px;color:#333;font-weight:normal;">2077027</div>
<div class="t" style="left:305.0px;width:600px;text-align:center;top:393.45px;font-size:14px;color:#333;font-weight:normal;">1</div>
<div class="t" style="left:479.5px;width:600px;text-align:center;top:393.45px;font-size:14px;color:#333;font-weight:normal;">10000.00000000</div>
<div class="t" style="left:677.0px;width:600px;text-align:center;top:393.45px;font-size:14px;color:#333;font-weight:normal;">9994.00</div>
<div class="a" style="left:1099px;top:394px;width:12px;height:12px;border-radius:50%;background:#18bc9c"></div>
<div class="t" style="left:1116px;top:393.45px;font-size:14px;color:#18bc9c;font-weight:normal;"><i class="c">出</i><i class="c">局</i></div>
<div class="t" style="left:1028.0px;width:600px;text-align:center;top:393.45px;font-size:14px;color:#333;font-weight:normal;">2022-06-26 19:39:31</div>
<div class="t" style="left:1310.5px;width:600px;text-align:center;top:393.45px;font-size:14px;color:#333;font-weight:normal;">2022-06-27 19:39:31</div>
<div class="a" style="left:1797px;top:389px;width:22px;height:22px;background:#18bc9c;border-radius:3px"></div>
<svg class="a" style="left:1802.2px;top:394.4px" width="11.1" height="10.174999999999999" viewBox="0 0 12 11"><path d="M0 11L.6 7.8L7.9 .5Q8.4 .1 8.9 .5L11.4 2.9Q11.8 3.4 11.4 3.8L3.8 10.5Z" fill="#fff"/><path d="M6.9 1.6L10.3 4.8" stroke="#000" stroke-opacity=".12" stroke-width=".6"/></svg>
<div class="a" style="left:1823px;top:389px;width:21px;height:22px;background:#f75444;border-radius:3px"></div>
<svg class="a" style="left:1828.6px;top:394px" width="10.1" height="10.9" viewBox="0 0 11 11"><path d="M3.2 0h4.6l.7 1.5H11v1.6H0V1.5h2.5zM.9 3.1h9.2l-.7 7.9H1.6z" fill="#fff"/><path d="M3.4 4.4v5.4M5.5 4.4v5.4M7.6 4.4v5.4" stroke="#f75444" stroke-width=".8" opacity=".85"/></svg>
<div class="a" style="left:276px;top:439px;width:13px;height:13px;border:1px solid #707070;border-radius:2px;background:#fff"></div>
<div class="t" style="left:52.0px;width:600px;text-align:center;top:440.45px;font-size:14px;color:#333;font-weight:normal;">405</div>
<div class="t" style="left:174.5px;width:600px;text-align:center;top:440.45px;font-size:14px;color:#333;font-weight:normal;">2077026</div>
<div class="t" style="left:305.0px;width:600px;text-align:center;top:440.45px;font-size:14px;color:#333;font-weight:normal;">1</div>
<div class="t" style="left:479.5px;width:600px;text-align:center;top:440.45px;font-size:14px;color:#333;font-weight:normal;">10000.00000000</div>
<div class="t" style="left:677.0px;width:600px;text-align:center;top:440.45px;font-size:14px;color:#333;font-weight:normal;">9994.00</div>
<div class="a" style="left:1099px;top:441px;width:12px;height:12px;border-radius:50%;background:#18bc9c"></div>
<div class="t" style="left:1116px;top:440.45px;font-size:14px;color:#18bc9c;font-weight:normal;"><i class="c">出</i><i class="c">局</i></div>
<div class="t" style="left:1028.0px;width:600px;text-align:center;top:440.45px;font-size:14px;color:#333;font-weight:normal;">2022-06-26 19:38:51</div>
<div class="t" style="left:1310.5px;width:600px;text-align:center;top:440.45px;font-size:14px;color:#333;font-weight:normal;">2022-06-27 19:38:51</div>
<div class="a" style="left:1797px;top:436px;width:22px;height:22px;background:#18bc9c;border-radius:3px"></div>
<svg class="a" style="left:1802.2px;top:441.4px" width="11.1" height="10.174999999999999" viewBox="0 0 12 11"><path d="M0 11L.6 7.8L7.9 .5Q8.4 .1 8.9 .5L11.4 2.9Q11.8 3.4 11.4 3.8L3.8 10.5Z" fill="#fff"/><path d="M6.9 1.6L10.3 4.8" stroke="#000" stroke-opacity=".12" stroke-width=".6"/></svg>
<div class="a" style="left:1823px;top:436px;width:21px;height:22px;background:#f75444;border-radius:3px"></div>
<svg class="a" style="left:1828.6px;top:441px" width="10.1" height="10.9" viewBox="0 0 11 11"><path d="M3.2 0h4.6l.7 1.5H11v1.6H0V1.5h2.5zM.9 3.1h9.2l-.7 7.9H1.6z" fill="#fff"/><path d="M3.4 4.4v5.4M5.5 4.4v5.4M7.6 4.4v5.4" stroke="#f75444" stroke-width=".8" opacity=".85"/></svg>
<div class="a" style="left:276px;top:486px;width:13px;height:13px;border:1px solid #707070;border-radius:2px;background:#fff"></div>
<div class="t" style="left:52.0px;width:600px;text-align:center;top:487.45px;font-size:14px;color:#333;font-weight:normal;">404</div>
<div class="t" style="left:174.5px;width:600px;text-align:center;top:487.45px;font-size:14px;color:#333;font-weight:normal;">2077025</div>
<div class="t" style="left:305.0px;width:600px;text-align:center;top:487.45px;font-size:14px;color:#333;font-weight:normal;">1</div>
<div class="t" style="left:479.5px;width:600px;text-align:center;top:487.45px;font-size:14px;color:#333;font-weight:normal;">10000.00000000</div>
<div class="t" style="left:677.0px;width:600px;text-align:center;top:487.45px;font-size:14px;color:#333;font-weight:normal;">9994.00</div>
<div class="a" style="left:1099px;top:488px;width:12px;height:12px;border-radius:50%;background:#18bc9c"></div>
<div class="t" style="left:1116px;top:487.45px;font-size:14px;color:#18bc9c;font-weight:normal;"><i class="c">出</i><i class="c">局</i></div>
<div class="t" style="left:1028.0px;width:600px;text-align:center;top:487.45px;font-size:14px;color:#333;font-weight:normal;">2022-06-26 19:38:09</div>
<div class="t" style="left:1310.5px;width:600px;text-align:center;top:487.45px;font-size:14px;color:#333;font-weight:normal;">2022-06-27 19:38:09</div>
<div class="a" style="left:1797px;top:483px;width:22px;height:22px;background:#18bc9c;border-radius:3px"></div>
<svg class="a" style="left:1802.2px;top:488.4px" width="11.1" height="10.174999999999999" viewBox="0 0 12 11"><path d="M0 11L.6 7.8L7.9 .5Q8.4 .1 8.9 .5L11.4 2.9Q11.8 3.4 11.4 3.8L3.8 10.5Z" fill="#fff"/><path d="M6.9 1.6L10.3 4.8" stroke="#000" stroke-opacity=".12" stroke-width=".6"/></svg>
<div class="a" style="left:1823px;top:483px;width:21px;height:22px;background:#f75444;border-radius:3px"></div>
<svg class="a" style="left:1828.6px;top:488px" width="10.1" height="10.9" viewBox="0 0 11 11"><path d="M3.2 0h4.6l.7 1.5H11v1.6H0V1.5h2.5zM.9 3.1h9.2l-.7 7.9H1.6z" fill="#fff"/><path d="M3.4 4.4v5.4M5.5 4.4v5.4M7.6 4.4v5.4" stroke="#f75444" stroke-width=".8" opacity=".85"/></svg>
<div class="a" style="left:276px;top:533px;width:13px;height:13px;border:1px solid #707070;border-radius:2px;background:#fff"></div>
<div class="t" style="left:52.0px;width:600px;text-align:center;top:534.45px;font-size:14px;color:#333;font-weight:normal;">403</div>
<div class="t" style="left:174.5px;width:600px;text-align:center;top:534.45px;font-size:14px;color:#333;font-weight:normal;">2077024</div>
<div class="t" style="left:305.0px;width:600px;text-align:center;top:534.45px;font-size:14px;color:#333;font-weight:normal;">3</div>
<div class="t" style="left:479.5px;width:600px;text-align:center;top:534.45px;font-size:14px;color:#333;font-weight:normal;">10100.00000008</div>
<div class="t" style="left:677.0px;width:600px;text-align:center;top:534.45px;font-size:14px;color:#333;font-weight:normal;">10092.93</div>
<div class="a" style="left:1099px;top:535px;width:12px;height:12px;border-radius:50%;background:#444c69"></div>
<div class="t" style="left:1116px;top:534.45px;font-size:14px;color:#444c69;font-weight:normal;"><i class="c">正</i><i class="c">常</i></div>
<div class="t" style="left:1028.0px;width:600px;text-align:center;top:534.45px;font-size:14px;color:#333;font-weight:normal;">2022-06-26 03:24:36</div>
<div class="t" style="left:1310.5px;width:600px;text-align:center;top:534.45px;font-size:14px;color:#333;font-weight:normal;">2022-09-26 09:24:36</div>
<div class="a" style="left:1797px;top:530px;width:22px;height:22px;background:#18bc9c;border-radius:3px"></div>
<svg class="a" style="left:1802.2px;top:535.4px" width="11.1" height="10.174999999999999" viewBox="0 0 12 11"><path d="M0 11L.6 7.8L7.9 .5Q8.4 .1 8.9 .5L11.4 2.9Q11.8 3.4 11.4 3.8L3.8 10.5Z" fill="#fff"/><path d="M6.9 1.6L10.3 4.8" stroke="#000" stroke-opacity=".12" stroke-width=".6"/></svg>
<div class="a" style="left:1823px;top:530px;width:21px;height:22px;background:#f75444;border-radius:3px"></div>
<svg class="a" style="left:1828.6px;top:535px" width="10.1" height="10.9" viewBox="0 0 11 11"><path d="M3.2 0h4.6l.7 1.5H11v1.6H0V1.5h2.5zM.9 3.1h9.2l-.7 7.9H1.6z" fill="#fff"/><path d="M3.4 4.4v5.4M5.5 4.4v5.4M7.6 4.4v5.4" stroke="#f75444" stroke-width=".8" opacity=".85"/></svg>
<div class="a" style="left:276px;top:580px;width:13px;height:13px;border:1px solid #707070;border-radius:2px;background:#fff"></div>
<div class="t" style="left:52.0px;width:600px;text-align:center;top:581.45px;font-size:14px;color:#333;font-weight:normal;">402</div>
<div class="t" style="left:174.5px;width:600px;text-align:center;top:581.45px;font-size:14px;color:#333;font-weight:normal;">2077023</div>
<div class="t" style="left:305.0px;width:600px;text-align:center;top:581.45px;font-size:14px;color:#333;font-weight:normal;">3</div>
<div class="t" style="left:479.5px;width:600px;text-align:center;top:581.45px;font-size:14px;color:#333;font-weight:normal;">10100.00000008</div>
<div class="t" style="left:677.0px;width:600px;text-align:center;top:581.45px;font-size:14px;color:#333;font-weight:normal;">10092.93</div>
<div class="a" style="left:1099px;top:582px;width:12px;height:12px;border-radius:50%;background:#444c69"></div>
<div class="t" style="left:1116px;top:581.45px;font-size:14px;color:#444c69;font-weight:normal;"><i class="c">正</i><i class="c">常</i></div>
<div class="t" style="left:1028.0px;width:600px;text-align:center;top:581.45px;font-size:14px;color:#333;font-weight:normal;">2022-06-26 03:24:06</div>
<div class="t" style="left:1310.5px;width:600px;text-align:center;top:581.45px;font-size:14px;color:#333;font-weight:normal;">2022-09-26 09:24:06</div>
<div class="a" style="left:1797px;top:577px;width:22px;height:22px;background:#18bc9c;border-radius:3px"></div>
<svg class="a" style="left:1802.2px;top:582.4px" width="11.1" height="10.174999999999999" viewBox="0 0 12 11"><path d="M0 11L.6 7.8L7.9 .5Q8.4 .1 8.9 .5L11.4 2.9Q11.8 3.4 11.4 3.8L3.8 10.5Z" fill="#fff"/><path d="M6.9 1.6L10.3 4.8" stroke="#000" stroke-opacity=".12" stroke-width=".6"/></svg>
<div class="a" style="left:1823px;top:577px;width:21px;height:22px;background:#f75444;border-radius:3px"></div>
<svg class="a" style="left:1828.6px;top:582px" width="10.1" height="10.9" viewBox="0 0 11 11"><path d="M3.2 0h4.6l.7 1.5H11v1.6H0V1.5h2.5zM.9 3.1h9.2l-.7 7.9H1.6z" fill="#fff"/><path d="M3.4 4.4v5.4M5.5 4.4v5.4M7.6 4.4v5.4" stroke="#f75444" stroke-width=".8" opacity=".85"/></svg>
<div class="a" style="left:276px;top:627px;width:13px;height:13px;border:1px solid #707070;border-radius:2px;background:#fff"></div>
<div class="t" style="left:52.0px;width:600px;text-align:center;top:628.45px;font-size:14px;color:#333;font-weight:normal;">401</div>
<div class="t" style="left:174.5px;width:600px;text-align:center;top:628.45px;font-size:14px;color:#333;font-weight:normal;">2077022</div>
<div class="t" style="left:305.0px;width:600px;text-align:center;top:628.45px;font-size:14px;color:#333;font-weight:normal;">3</div>
<div class="t" style="left:479.5px;width:600px;text-align:center;top:628.45px;font-size:14px;color:#333;font-weight:normal;">10100.00000008</div>
<div class="t" style="left:677.0px;width:600px;text-align:center;top:628.45px;font-size:14px;color:#333;font-weight:normal;">10092.93</div>
<div class="a" style="left:1099px;top:629px;width:12px;height:12px;border-radius:50%;background:#444c69"></div>
<div class="t" style="left:1116px;top:628.45px;font-size:14px;color:#444c69;font-weight:normal;"><i class="c">正</i><i class="c">常</i></div>
<div class="t" style="left:1028.0px;width:600px;text-align:center;top:628.45px;font-size:14px;color:#333;font-weight:normal;">2022-06-26 03:23:40</div>
<div class="t" style="left:1310.5px;width:600px;text-align:center;top:628.45px;font-size:14px;color:#333;font-weight:normal;">2022-09-26 09:23:40</div>
<div class="a" style="left:1797px;top:624px;width:22px;height:22px;background:#18bc9c;border-radius:3px"></div>
<svg class="a" style="left:1802.2px;top:629.4px" width="11.1" height="10.174999999999999" viewBox="0 0 12 11"><path d="M0 11L.6 7.8L7.9 .5Q8.4 .1 8.9 .5L11.4 2.9Q11.8 3.4 11.4 3.8L3.8 10.5Z" fill="#fff"/><path d="M6.9 1.6L10.3 4.8" stroke="#000" stroke-opacity=".12" stroke-width=".6"/></svg>
<div class="a" style="left:1823px;top:624px;width:21px;height:22px;background:#f75444;border-radius:3px"></div>
<svg class="a" style="left:1828.6px;top:629px" width="10.1" height="10.9" viewBox="0 0 11 11"><path d="M3.2 0h4.6l.7 1.5H11v1.6H0V1.5h2.5zM.9 3.1h9.2l-.7 7.9H1.6z" fill="#fff"/><path d="M3.4 4.4v5.4M5.5 4.4v5.4M7.6 4.4v5.4" stroke="#f75444" stroke-width=".8" opacity=".85"/></svg>
<div class="a" style="left:276px;top:674px;width:13px;height:13px;border:1px solid #707070;border-radius:2px;background:#fff"></div>
<div class="t" style="left:52.0px;width:600px;text-align:center;top:675.45px;font-size:14px;color:#333;font-weight:normal;">400</div>
<div class="t" style="left:174.5px;width:600px;text-align:center;top:675.45px;font-size:14px;color:#333;font-weight:normal;">2077021</div>
<div class="t" style="left:305.0px;width:600px;text-align:center;top:675.45px;font-size:14px;color:#333;font-weight:normal;">3</div>
<div class="t" style="left:479.5px;width:600px;text-align:center;top:675.45px;font-size:14px;color:#333;font-weight:normal;">10100.00000008</div>
<div class="t" style="left:677.0px;width:600px;text-align:center;top:675.45px;font-size:14px;color:#333;font-weight:normal;">10092.93</div>
<div class="a" style="left:1099px;top:676px;width:12px;height:12px;border-radius:50%;background:#444c69"></div>
<div class="t" style="left:1116px;top:675.45px;font-size:14px;color:#444c69;font-weight:normal;"><i class="c">正</i><i class="c">常</i></div>
<div class="t" style="left:1028.0px;width:600px;text-align:center;top:675.45px;font-size:14px;color:#333;font-weight:normal;">2022-06-26 03:23:12</div>
<div class="t" style="left:1310.5px;width:600px;text-align:center;top:675.45px;font-size:14px;color:#333;font-weight:normal;">2022-09-26 09:23:12</div>
<div class="a" style="left:1797px;top:671px;width:22px;height:22px;background:#18bc9c;border-radius:3px"></div>
<svg class="a" style="left:1802.2px;top:676.4px" width="11.1" height="10.174999999999999" viewBox="0 0 12 11"><path d="M0 11L.6 7.8L7.9 .5Q8.4 .1 8.9 .5L11.4 2.9Q11.8 3.4 11.4 3.8L3.8 10.5Z" fill="#fff"/><path d="M6.9 1.6L10.3 4.8" stroke="#000" stroke-opacity=".12" stroke-width=".6"/></svg>
<div class="a" style="left:1823px;top:671px;width:21px;height:22px;background:#f75444;border-radius:3px"></div>
<svg class="a" style="left:1828.6px;top:676px" width="10.1" height="10.9" viewBox="0 0 11 11"><path d="M3.2 0h4.6l.7 1.5H11v1.6H0V1.5h2.5zM.9 3.1h9.2l-.7 7.9H1.6z" fill="#fff"/><path d="M3.4 4.4v5.4M5.5 4.4v5.4M7.6 4.4v5.4" stroke="#f75444" stroke-width=".8" opacity=".85"/></svg>
<div class="t" style="left:260px;top:726.15px;font-size:14px;color:#333;font-weight:normal;"><i class="c">显</i><i class="c">示</i><i class="c">第</i> 1 <i class="c">到</i><i class="c">第</i> 10 <i class="c">条</i><i class="c">记</i><i class="c">录</i><i class="c">，</i><i class="c">总</i><i class="c">共</i> 392 <i class="c">条</i><i class="c">记</i><i class="c">录</i> <i class="c">每</i><i class="c">页</i><i class="c">显</i><i class="c">示</i></div>
<div class="a" style="left:591px;top:718px;width:52px;height:33px;border:1px solid #ddd;background:#f4f4f4;border-radius:3px"></div>
<div class="t" style="left:603.5px;top:726.15px;font-size:14px;color:#333;font-weight:normal;">10</div>
<svg class="a" style="left:622px;top:733px" width="8" height="4" viewBox="0 0 8 4"><path d="M0 4L4 0l4 4z" fill="#333"/></svg>
<div class="t" style="left:647px;top:726.15px;font-size:14px;color:#333;font-weight:normal;"><i class="c">条</i><i class="c">记</i><i class="c">录</i></div>
<div class="a" style="left:1402px;top:716px;width:376px;height:34px;border:1px solid #ddd;border-radius:2px 0 0 2px;background:#fafafa"></div>
<div class="t" style="left:1135.5px;width:600px;text-align:center;top:725.95px;font-size:14px;color:#555;font-weight:normal;"><i class="c">上</i><i class="c">一</i><i class="c">页</i></div>
<div class="a" style="left:1469px;top:716px;width:34px;height:34px;background:#444c69"></div>
<div class="t" style="left:1186.0px;width:600px;text-align:center;top:725.95px;font-size:14px;color:#fff;font-weight:normal;">1</div>
<div class="t" style="left:1218.5px;width:600px;text-align:center;top:725.95px;font-size:14px;color:#555;font-weight:normal;">2</div>
<div class="a" style="left:1534px;top:717px;width:1px;height:32px;background:#ddd"></div>
<div class="t" style="left:1250.5px;width:600px;text-align:center;top:725.95px;font-size:14px;color:#555;font-weight:normal;">3</div>
<div class="a" style="left:1567px;top:717px;width:1px;height:32px;background:#ddd"></div>
<div class="t" style="left:1283.5px;width:600px;text-align:center;top:725.95px;font-size:14px;color:#555;font-weight:normal;">4</div>
<div class="a" style="left:1600px;top:717px;width:1px;height:32px;background:#ddd"></div>
<div class="t" style="left:1316.5px;width:600px;text-align:center;top:725.95px;font-size:14px;color:#555;font-weight:normal;">5</div>
<div class="a" style="left:1633px;top:717px;width:1px;height:32px;background:#ddd"></div>
<div class="a" style="left:1634px;top:717px;width:35px;height:32px;background:#fff"></div>
<div class="t" style="left:1351.0px;width:600px;text-align:center;top:725.95px;font-size:14px;color:#666;font-weight:normal;">...</div>
<div class="a" style="left:1669px;top:717px;width:1px;height:32px;background:#ddd"></div>
<div class="t" style="left:1389.5px;width:600px;text-align:center;top:725.95px;font-size:14px;color:#555;font-weight:normal;">40</div>
<div class="a" style="left:1710px;top:717px;width:1px;height:32px;background:#ddd"></div>
<div class="t" style="left:1444.0px;width:600px;text-align:center;top:725.95px;font-size:14px;color:#555;font-weight:normal;"><i class="c">下</i><i class="c">一</i><i class="c">页</i></div>
<div class="a" style="left:1783px;top:716px;width:50px;height:33px;border:1px solid #d2d6de;background:#fff"></div>
<div class="a" style="left:1838px;top:717px;width:52px;height:33px;border:1px solid #ddd;background:#f4f4f4;border-radius:3px"></div>
<div class="t" style="left:1564px;width:600px;text-align:center;top:725.65px;font-size:14px;color:#333;font-weight:normal;"><i class="c">跳</i><i class="c">转</i></div>
</body></html>
